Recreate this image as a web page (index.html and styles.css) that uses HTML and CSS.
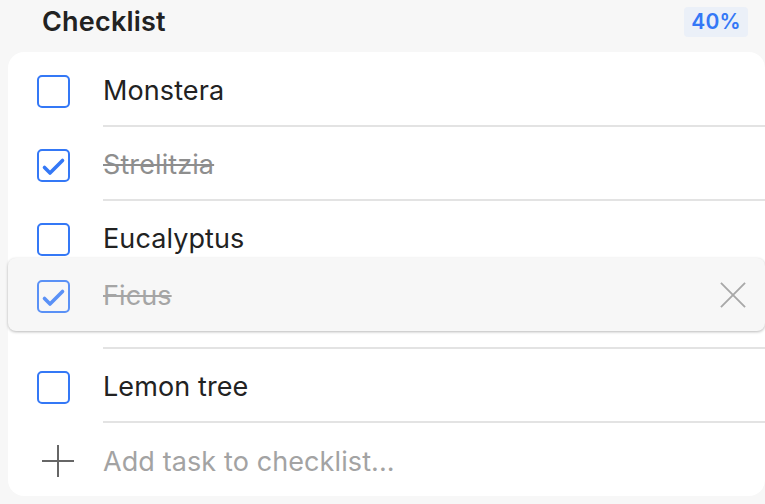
FILE: index.html
```
<!DOCTYPE html>
<html>
<head>
<meta charset="utf-8">
<link rel="stylesheet" href="styles.css">
</head>
<body>
<div class="header">
  <h1 class="title">Checklist</h1>
  <span class="badge">40%</span>
</div>
<div class="card">
  <div class="row">
    <span class="check"></span>
    <span class="label">Monstera</span>
  </div>
  <div class="row">
    <span class="check checked"><svg viewBox="0 0 29 29"><path d="M5.5 16.5 L11 22 L23.5 9.5"/></svg></span>
    <span class="label done">Strelitzia</span>
  </div>
  <div class="row">
    <span class="check"></span>
    <span class="label">Eucalyptus</span>
  </div>
  <div class="row placeholder">
    <span class="label"></span>
  </div>
  <div class="row">
    <span class="check"></span>
    <span class="label">Lemon tree</span>
  </div>
  <div class="row add">
    <span class="plus"><svg viewBox="0 0 34 34"><path d="M17 1 V33 M1 17 H33"/></svg></span>
    <span class="label hint">Add task to checklist...</span>
  </div>
  <div class="drag">
    <span class="check checked faded"><svg viewBox="0 0 29 29"><path d="M5.5 16.5 L11 22 L23.5 9.5"/></svg></span>
    <span class="label done light">Ficus</span>
    <span class="close"><svg viewBox="0 0 28 28"><path d="M1 1 L27 27 M27 1 L1 27"/></svg></span>
  </div>
</div>
</body>
</html>
```
FILE: styles.css
```
html, body {
  margin: 0;
  padding: 0;
  background: #f7f7f7;
  font-family: Inter, "Noto Sans", sans-serif;
  width: 765px;
  height: 504px;
  overflow: hidden;
}
.header {
  display: flex;
  align-items: center;
  justify-content: space-between;
  height: 43px;
  padding: 0 17px 0 42px;
  margin-bottom: 9px;
}
.title {
  margin: 0;
  font-size: 27px;
  font-weight: 600;
  color: #222;
  letter-spacing: 0.2px;
}
.badge {
  background: #ebf0f8;
  color: #3478f6;
  font-size: 21px;
  font-weight: 600;
  padding: 3px 7px;
  border-radius: 4px;
  letter-spacing: 0.3px;
  line-height: 24px;
}
.card {
  position: relative;
  margin-left: 8px;
  background: #fff;
  border-radius: 16px;
  padding-top: 1px;
  height: 443px;
}
.row {
  display: flex;
  align-items: center;
  height: 74px;
}
.check {
  box-sizing: border-box;
  width: 33px;
  height: 33px;
  margin-left: 29px;
  margin-top: 3px;
  border: 2px solid #3478f6;
  border-radius: 5px;
  display: flex;
  flex-shrink: 0;
}
.check svg {
  width: 100%;
  height: 100%;
}
.check svg path {
  fill: none;
  stroke: #3478f6;
  stroke-width: 3.6;
  stroke-linecap: round;
  stroke-linejoin: round;
}
.faded {
  opacity: 0.8;
}
.label {
  flex: 1;
  align-self: stretch;
  display: flex;
  align-items: center;
  margin-left: 33px;
  padding-top: 2px;
  border-bottom: 2px solid #e3e3e3;
  font-size: 27px;
  color: #222;
  letter-spacing: 0.1px;
}
.placeholder .label {
  margin-left: 95px;
}
.done {
  color: #8e8e8e;
  text-decoration: line-through;
  text-decoration-thickness: 2px;
}
.light {
  color: #a5a5a5;
}
.add .label {
  border-bottom: none;
  margin-left: 28px;
}
.hint {
  color: #a3a3a3;
}
.plus {
  width: 34px;
  height: 34px;
  margin-left: 33px;
  margin-top: 2px;
  display: flex;
}
.plus svg, .close svg {
  width: 100%;
  height: 100%;
}
.plus path {
  stroke: #666;
  stroke-width: 2;
  fill: none;
}
.drag {
  position: absolute;
  top: 206px;
  left: 0;
  right: 0;
  height: 73px;
  background: #f7f7f7;
  border-radius: 8px;
  box-shadow: 0 1px 3px rgba(0, 0, 0, 0.28);
  display: flex;
  align-items: center;
}
.drag .label {
  border-bottom: none;
}
.close {
  width: 26px;
  height: 26px;
  margin-right: 19px;
  display: flex;
}
.close path {
  stroke: #a8a8a8;
  stroke-width: 2;
  fill: none;
}
```
